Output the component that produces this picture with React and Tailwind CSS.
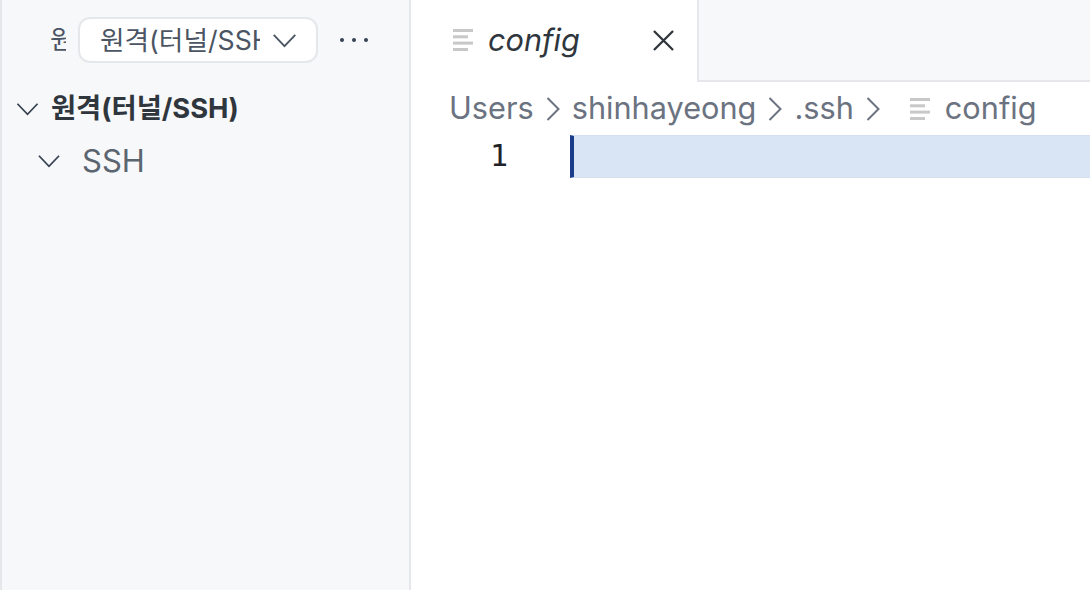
import React from "react";

const font = { fontFamily: '"Inter", "Noto Sans CJK KR", sans-serif' };

const Chevron = ({ className }) => (
  <svg viewBox="0 0 26 16" fill="none" stroke="currentColor" strokeWidth="2" className={className}>
    <path d="M1.5 2 L13 14 L24.500 2" />
  </svg>
);

const Crumb = () => (
  <svg viewBox="0 0 14 24" fill="none" stroke="#6b7280" strokeWidth="2" className="h-[24px] w-[14px] shrink-0">
    <path d="M1.500 1 L12.500 12 L1.500 23" />
  </svg>
);

const FileLines = () => (
  <svg viewBox="0 0 20 22" fill="#c8c8c8" className="h-[22px] w-[20px] shrink-0">
    <rect x="0" y="0" width="20" height="3" />
    <rect x="0" y="6.300" width="15" height="3" />
    <rect x="0" y="12.600" width="20" height="3" />
    <rect x="0" y="19" width="15" height="3" />
  </svg>
);

export default function App() {
  return (
    <div style={font} className="flex h-[590px] w-[1090px] overflow-hidden bg-white">
      {/* sidebar */}
      <aside className="flex h-full w-[411px] shrink-0 flex-col border-x-2 border-[#e5e7eb] bg-[#f7f8fa]">
        <div className="mt-[18px] flex h-[44px] items-center pl-[48px]">
          <span className="w-[16px] overflow-hidden whitespace-nowrap text-[26px] leading-[34px] text-[#4b5563]">원격</span>
          <div className="ml-[12px] flex h-[46px] w-[240px] items-center rounded-[12px] border-2 border-[#e5e7eb] bg-white pl-[20px]">
            <span className="w-[160px] overflow-hidden whitespace-nowrap text-[26.700px] leading-[34px] text-[#4b5563]">원격(터널/SSH)</span>
            <Chevron className="ml-[12px] h-[15px] w-[25px] text-[#4b5563]" />
          </div>
          <div className="ml-[22px] flex gap-[8px]">
            <span className="h-[4px] w-[4px] rounded-full bg-[#374151]" />
            <span className="h-[4px] w-[4px] rounded-full bg-[#374151]" />
            <span className="h-[4px] w-[4px] rounded-full bg-[#374151]" />
          </div>
        </div>
        <div className="mt-[27px] flex h-[40px] items-center pl-[14px]">
          <Chevron className="h-[14px] w-[23px] text-[#374151]" />
          <span className="ml-[12px] text-[27.300px] font-bold text-[#2f363d]">원격(터널/SSH)</span>
        </div>
        <div className="mt-[12px] flex h-[40px] items-center pl-[35px]">
          <Chevron className="h-[14px] w-[24px] text-[#374151]" />
          <span className="ml-[21px] text-[31px] text-[#5b6570]">SSH</span>
        </div>
      </aside>

      {/* editor */}
      <main className="flex min-w-0 flex-1 flex-col">
        <div className="flex h-[82px] shrink-0 bg-[#f7f8fa]">
          <div className="flex h-full w-[288px] items-center border-r-2 border-[#e5e7eb] bg-white pb-[2px] pl-[42px]">
            <FileLines />
            <span className="ml-[15px] text-[30.700px] italic text-[#2f363d]">config</span>
            <svg viewBox="0 0 22 22" fill="none" stroke="#2f363d" strokeWidth="2.400" className="ml-[73px] h-[21px] w-[21px]">
              <path d="M1 1 L21 21 M21 1 L1 21" />
            </svg>
          </div>
          <div className="flex-1 border-b-2 border-[#e5e7eb]" />
        </div>
        <div className="flex h-[53px] shrink-0 items-center pl-[38px] text-[30.700px] text-[#6b7280]">
          <span>Users</span>
          <span className="mx-[12px]"><Crumb /></span>
          <span>shinhayeong</span>
          <span className="mx-[12px]"><Crumb /></span>
          <span>.ssh</span>
          <span className="mx-[12px]"><Crumb /></span>
          <span className="ml-[18px]"><FileLines /></span>
          <span className="ml-[15px]">config</span>
        </div>
        <div className="flex h-[43px] shrink-0">
          <div className="w-[159px] pr-[62px] text-right text-[30px] leading-[42px] text-[#1f2328]" style={{ fontFamily: '"DejaVu Sans Mono", monospace' }}>1</div>
          <div className="flex-1 border-y border-l-4 border-y-[#d4e0ef] border-l-[#1a3d8a] bg-[#d9e5f4]" />
        </div>
      </main>
    </div>
  );
}
